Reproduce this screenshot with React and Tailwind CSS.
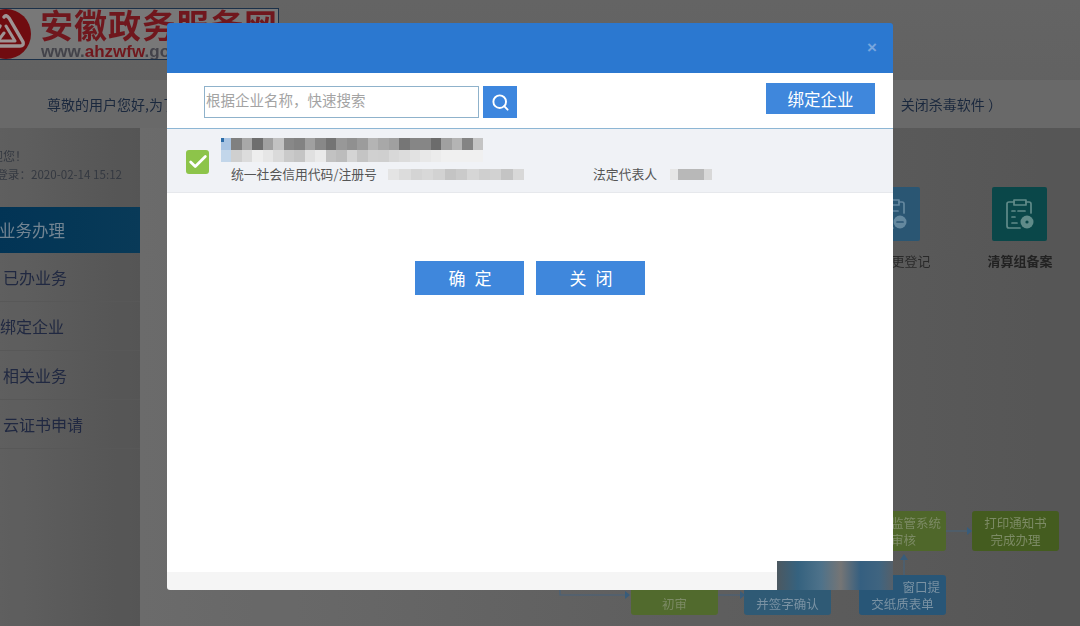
import React from 'react';
import { Search, Check } from 'lucide-react';

const font = { fontFamily: '"Noto Sans CJK SC", "Liberation Sans", sans-serif' };

const nameTop = ['#a9c4e2', '#808080', '#a8a8a8', '#6e6e6e', '#a0a0a0', '#c2c2c2', '#888888', '#828282', '#a0a0a0', '#888888', '#747474', '#989898', '#909090', '#9c9c9c', '#b4b4b4', '#a8a8a8', '#a0a0a0', '#767676', '#868686', '#868686', '#6c6c6c', '#a0a0a0', '#b4b4b4', '#848484', '#c4c4c4'];
const nameBottom = ['#c2d6ea', '#cfcfcf', '#dcdcdc', '#eeeeee', '#e6e6e6', '#dadada', '#cacaca', '#c4c4c4', '#e0e0e0', '#eaeaea', '#c2c2c2', '#bcbcbc', '#d4d4d4', '#c4c4c4', '#d0d0d0', '#cfcfcf', '#d8d8d8', '#dcdcdc', '#e2e2e2', '#e8e8e8', '#ececec', '#f0f0f0', '#f0f0f0', '#f0f0f0', '#f0f0f0'];
const codeCells = ['#e4e4e4', '#dcdcdc', '#d4d4d4', '#d8d8d8', '#d2d2d2', '#c4c4c4', '#cacaca', '#d6d6d6', '#cfcfcf', '#d2d2d2', '#c4c4c4', '#d8d8d8'];
const sideItems = ['已办业务', '绑定企业', '相关业务', '云证书申请'];

const Mosaic = ({ cells, className }) => (
  <div className={`flex ${className}`}>
    {cells.map((c, i) => (
      <div key={i} className="flex-1" style={{ backgroundColor: c }} />
    ))}
  </div>
);

const FlowBox = ({ className, children }) => (
  <div className={`absolute w-[87px] h-[40px] rounded-[3px] flex flex-col items-center justify-center text-[12.5px] leading-[17px] ${className}`}>
    {children}
  </div>
);

// clipboard with a round stamp, used on both service tiles
const FormIcon = ({ className, minus }) => (
  <svg viewBox="0 0 28 32" fill="none" stroke="currentColor" strokeWidth="1.7" strokeLinecap="round" strokeLinejoin="round" className={className}>
    <path d="M8 4 H3 Q1 4 1 6 V28 Q1 30 3 30 H14" />
    <path d="M20 4 H23 Q25 4 25 6 V15" />
    <path d="M8 2 H20 V7 H8 Z" />
    <path d="M6 13 H9 M12 13 H19 M6 19 H9 M6 25 H11" />
    <circle cx="21" cy="24" r="6.5" fill="currentColor" stroke="none" />
    {minus && <path d="M18 24 H24" stroke="#2f5f80" />}
    {!minus && <circle cx="21" cy="24" r="1.6" fill="#0b4f51" stroke="none" />}
  </svg>
);

export default function App() {
  return (
    <div className="relative w-[1080px] h-[626px] overflow-hidden bg-[#5f5f5f]" style={font}>
      {/* page behind the dialog */}
      <div className="absolute inset-0 blur-[0.7px] brightness-[0.9] bg-gradient-to-b from-[#6f6f6f] via-[#666666] to-[#5a5a5a]">
        <div className="h-[80px] pt-[8px]">
          <div className="relative w-[279px] h-[52px] bg-[#858585] border-y border-r border-[#1e3550] overflow-hidden">
            <svg viewBox="0 0 50 50" className="absolute left-[-19px] top-[0px] w-[50px] h-[50px]">
              <circle cx="25" cy="25" r="25" fill="#7c0d12" />
              <path d="M23 8 Q25 5 28 9 L42 33 Q43 37 39 37 H12 Q7 37 9 33 L19 17" fill="none" stroke="#b0a4a4" strokeWidth="3.4" strokeLinecap="round" />
              <path d="M25 17 L34 32 H17 L23 24" fill="none" stroke="#b0a4a4" strokeWidth="3" strokeLinecap="round" strokeLinejoin="round" />
            </svg>
            <div className="absolute left-[40px] top-[-5px] text-[33px] leading-[40px] font-bold tracking-[1px] whitespace-nowrap text-[#7c1a20]">安徽政务服务网</div>
            <div className="absolute left-[41px] top-[33px] text-[17px] leading-[20px] font-bold whitespace-nowrap text-[#4a4a52]" style={{ fontFamily: '"Liberation Sans", sans-serif' }}>
              www.<span className="text-[#7c1a20]">ahzwfw</span>.gov.cn
            </div>
          </div>
        </div>

        <div className="h-[48px] bg-[#757575] flex items-center justify-between pl-[47px] pr-[78px] text-[14px] text-[#1d2c44] whitespace-nowrap">
          <span>尊敬的用户您好,为了您更好的使用</span>
          <span>关闭杀毒软件 ）</span>
        </div>

        <div className="flex h-[498px]">
          <div className="w-[140px] shrink-0 overflow-hidden bg-gradient-to-r from-[#6a6a6a] to-[#5e5e5e]">
            <div className="h-[79px] pt-[19px] text-[12px] leading-[18px] text-[#3a3f48] whitespace-nowrap">
              <div className="ml-[-21px]">欢迎您！</div>
              <div className="ml-[-27px] text-[11.6px]">上次登录：2020-02-14 15:12</div>
            </div>
            <div className="h-[46px] ml-[-1px] flex items-center text-[16.5px] text-[#7f93a2] bg-gradient-to-r from-[#023a5e] to-[#0a4062] whitespace-nowrap">业务办理</div>
            {sideItems.map((t, i) => (
              <div key={t} className={`h-[49px] flex items-center border-b border-[#626262] text-[16px] text-[#242d48] whitespace-nowrap ${i === 1 ? 'pl-0' : 'pl-[3px]'}`}>{t}</div>
            ))}
          </div>
          <div className="flex-1 bg-gradient-to-r from-[#777777] to-[#5f5f5f]" />
        </div>

        {/* service tiles */}
        <div className="absolute left-[865px] top-[187px] w-[55px] h-[54px] rounded-[2px] bg-[#2f5f80] flex items-center justify-center text-[#6f97b0]">
          <FormIcon minus className="w-[28px] h-[32px]" />
        </div>
        <div className="absolute left-[852px] top-[252px] w-[105px] text-center text-[13px] leading-[18px] text-[#2e2e2e] whitespace-nowrap">变更登记</div>
        <div className="absolute left-[992px] top-[187px] w-[55px] h-[54px] rounded-[2px] bg-[#0b4f51] flex items-center justify-center text-[#6b9a98]">
          <FormIcon className="w-[28px] h-[32px]" />
        </div>
        <div className="absolute left-[970px] top-[252px] w-[100px] text-center text-[13px] leading-[18px] font-bold text-[#262626] whitespace-nowrap">清算组备案</div>

        {/* flow chart */}
        <FlowBox className="left-[859px] top-[511px] bg-[#58722f] text-[#8a9a70]">
          <span className="self-end pr-[5px]">监管系统</span>
          <span className="self-end pr-[30px]">审核</span>
        </FlowBox>
        <FlowBox className="left-[972px] top-[511px] bg-[#4c6622] text-[#8a9a70]">
          <span>打印通知书</span>
          <span>完成办理</span>
        </FlowBox>
        <FlowBox className="left-[631px] top-[575px] bg-[#5a7632] text-[#8a9a70] justify-end pb-[3px]">
          <span>初审</span>
        </FlowBox>
        <FlowBox className="left-[744px] top-[575px] bg-[#346482] text-[#87a2b5] justify-end pb-[3px]">
          <span>并签字确认</span>
        </FlowBox>
        <FlowBox className="left-[859px] top-[575px] bg-[#2c5f84] text-[#87a2b5]">
          <span className="self-end pr-[6px]">窗口提</span>
          <span>交纸质表单</span>
        </FlowBox>
        <svg className="absolute left-[555px] top-[500px] w-[525px] h-[126px]" viewBox="0 0 525 126" fill="none">
          <path d="M5 85 V95 H70 M163 95 H185 M349 75 V58 M391 31 H412" stroke="#4e6d88" strokeWidth="1.2" />
          <path d="M70 91 L75 95 L70 99 Z M185 91 L190 95 L185 99 Z M345 60 L349 54 L353 60 Z M412 27 L417 31 L412 35 Z" fill="#3e6688" />
        </svg>
      </div>

      {/* dialog */}
      <div className="absolute left-[167px] top-[23px] w-[726px] h-[567px] flex flex-col rounded-t-[3px] overflow-hidden">
        <div className="h-[50px] shrink-0 bg-[#2b78d0] flex items-center justify-end pr-[16px]">
          <span className="text-[17px] font-bold text-[#78a6de]" style={{ fontFamily: '"Liberation Sans", sans-serif' }}>×</span>
        </div>

        <div className="h-[56px] shrink-0 bg-white border-b border-[#8db6d4] flex items-start justify-between pl-[37px] pr-[18px]">
          <div className="flex gap-[4px] mt-[13px]">
            <div className="w-[275px] h-[32px] border border-[#8fb2cb] flex items-center pl-[1px] pb-[4px] text-[14.5px] text-[#a3a3a3] whitespace-nowrap">根据企业名称，快速搜索</div>
            <button className="w-[34px] h-[32px] bg-[#3d86de] flex items-center justify-center text-white">
              <Search size={19} strokeWidth={2.4} />
            </button>
          </div>
          <button className="mt-[10px] w-[109px] h-[31px] pt-[1px] bg-[#3f87dc] text-[16.5px] text-white">绑定企业</button>
        </div>

        <div className="h-[64px] shrink-0 bg-[#f0f2f6] border-b border-[#e6e8ec] flex items-center pl-[19px]">
          <div className="w-[23px] h-[24px] mt-[3px] rounded-[3px] bg-[#8dc44a] flex items-center justify-center text-white shrink-0">
            <Check size={22} strokeWidth={3} />
          </div>
          <div className="flex-1 flex flex-col ml-[12px] h-full">
            <div className="relative w-[262px] h-[24px] mt-[9px] blur-[0.6px]">
              <Mosaic cells={nameTop} className="h-[12px]" />
              <Mosaic cells={nameBottom} className="h-[12px]" />
              <span className="absolute left-0 top-0 w-[3px] h-[4px] bg-[#2b6ca8]" />
            </div>
            <div className="flex items-center mt-[3px] pl-[10px] text-[12.8px] leading-[18px] text-[#555555] whitespace-nowrap">
              <span className="w-[157px]">统一社会信用代码/注册号</span>
              <Mosaic cells={codeCells} className="w-[136px] h-[11px] blur-[0.5px]" />
              <span className="ml-[69px] w-[77px]">法定代表人</span>
              <Mosaic cells={['#e6e6e6', '#b8b8b8', '#b8b8b8', '#b8b8b8', '#d8d8d8']} className="w-[42px] h-[11px] blur-[0.5px]" />
            </div>
          </div>
        </div>

        <div className="h-[368px] shrink-0 bg-white flex justify-center gap-[12px] pt-[68px]">
          <button className="w-[109px] h-[34px] bg-[#3f87dc] text-[17px] tracking-[9px] pl-[10px] pb-[1px] text-white">确定</button>
          <button className="w-[109px] h-[34px] bg-[#3f87dc] text-[17px] tracking-[9px] pl-[10px] pb-[1px] text-white">关闭</button>
        </div>

        <div className="flex flex-1">
          <div className="w-[610px] flex flex-col rounded-bl-[3px] overflow-hidden">
            <div className="h-[11px] bg-white" />
            <div className="flex-1 bg-[#f5f5f5]" />
          </div>
          <div className="flex-1 bg-[linear-gradient(90deg,#4c5860_0%,#35627f_18%,#4e728a_38%,#757575_55%,#355f80_72%,#3f6480_88%,#55606a_100%)]" />
        </div>
      </div>
    </div>
  );
}
